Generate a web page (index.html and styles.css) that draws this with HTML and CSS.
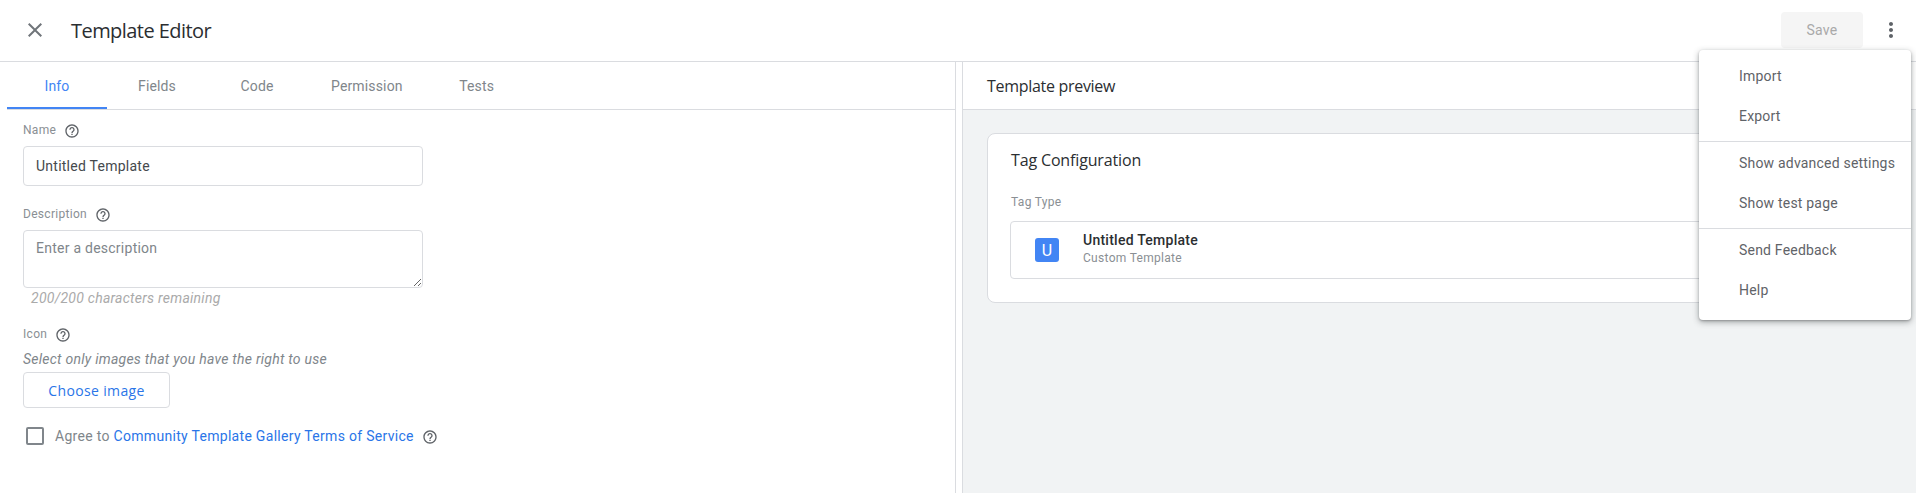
FILE: index.html
```html
<!DOCTYPE html>
<html lang="en">
<head>
<meta charset="utf-8">
<title>Template Editor</title>
<link rel="stylesheet" href="styles.css">
</head>
<body>
<div class="page">
  <header class="topbar">
    <svg class="icon close" viewBox="0 0 24 24"><path d="M19 6.41 17.59 5 12 10.59 6.41 5 5 6.41 10.59 12 5 17.59 6.41 19 12 13.41 17.59 19 19 17.59 13.41 12z"/></svg>
    <h1 class="title">Template Editor</h1>
    <div class="save">Save</div>
    <svg class="icon more" viewBox="0 0 24 24"><path d="M12 8c1.1 0 2-.9 2-2s-.9-2-2-2-2 .9-2 2 .9 2 2 2zm0 2c-1.1 0-2 .9-2 2s.9 2 2 2 2-.9 2-2-.9-2-2-2zm0 6c-1.1 0-2 .9-2 2s.9 2 2 2 2-.9 2-2-.9-2-2-2z"/></svg>
  </header>
  <main class="main">
    <section class="left">
      <nav class="tabs">
        <div class="tab active">Info</div>
        <div class="tab">Fields</div>
        <div class="tab">Code</div>
        <div class="tab">Permission</div>
        <div class="tab">Tests</div>
      </nav>
      <form class="form">
        <div class="label name-label">Name
          <svg class="help" viewBox="0 0 24 24"><path d="M11 18h2v-2h-2v2zm1-16C6.48 2 2 6.48 2 12s4.48 10 10 10 10-4.48 10-10S17.52 2 12 2zm0 18c-4.41 0-8-3.59-8-8s3.59-8 8-8 8 3.59 8 8-3.59 8-8 8zm0-14c-2.21 0-4 1.79-4 4h2c0-1.1.9-2 2-2s2 .9 2 2c0 2-3 1.75-3 5h2c0-2.25 3-2.5 3-5 0-2.21-1.79-4-4-4z"/></svg>
        </div>
        <input class="field name-input" type="text" value="Untitled Template">
        <div class="label desc-label">Description
          <svg class="help" viewBox="0 0 24 24"><path d="M11 18h2v-2h-2v2zm1-16C6.48 2 2 6.48 2 12s4.48 10 10 10 10-4.48 10-10S17.52 2 12 2zm0 18c-4.41 0-8-3.59-8-8s3.59-8 8-8 8 3.59 8 8-3.59 8-8 8zm0-14c-2.21 0-4 1.79-4 4h2c0-1.1.9-2 2-2s2 .9 2 2c0 2-3 1.75-3 5h2c0-2.25 3-2.5 3-5 0-2.21-1.79-4-4-4z"/></svg>
        </div>
        <textarea class="field desc-input" placeholder="Enter a description"></textarea>
        <div class="remaining">200/200 characters remaining</div>
        <div class="label icon-label">Icon
          <svg class="help" viewBox="0 0 24 24"><path d="M11 18h2v-2h-2v2zm1-16C6.48 2 2 6.48 2 12s4.48 10 10 10 10-4.48 10-10S17.52 2 12 2zm0 18c-4.41 0-8-3.59-8-8s3.59-8 8-8 8 3.59 8 8-3.59 8-8 8zm0-14c-2.21 0-4 1.79-4 4h2c0-1.1.9-2 2-2s2 .9 2 2c0 2-3 1.75-3 5h2c0-2.25 3-2.5 3-5 0-2.21-1.79-4-4-4z"/></svg>
        </div>
        <div class="hint">Select only images that you have the right to use</div>
        <div class="choose">Choose image</div>
        <div class="agree">
          <span class="checkbox"></span>
          <span class="agree-text">Agree to <a class="link">Community Template Gallery Terms of Service</a></span>
          <svg class="help" viewBox="0 0 24 24"><path d="M11 18h2v-2h-2v2zm1-16C6.48 2 2 6.48 2 12s4.48 10 10 10 10-4.48 10-10S17.52 2 12 2zm0 18c-4.41 0-8-3.59-8-8s3.59-8 8-8 8 3.59 8 8-3.59 8-8 8zm0-14c-2.21 0-4 1.79-4 4h2c0-1.1.9-2 2-2s2 .9 2 2c0 2-3 1.75-3 5h2c0-2.25 3-2.5 3-5 0-2.21-1.79-4-4-4z"/></svg>
        </div>
      </form>
    </section>
    <section class="right">
      <div class="preview-head">Template preview</div>
      <div class="preview-body">
        <div class="card">
          <h2 class="card-title">Tag Configuration</h2>
          <div class="card-label">Tag Type</div>
          <div class="tag-box">
            <div class="tag-icon">U</div>
            <div class="tag-text">
              <div class="tag-name">Untitled Template</div>
              <div class="tag-sub">Custom Template</div>
            </div>
          </div>
        </div>
      </div>
    </section>
  </main>
  <div class="menu">
    <div class="menu-item">Import</div>
    <div class="menu-item">Export</div>
    <div class="menu-divider"></div>
    <div class="menu-item">Show advanced settings</div>
    <div class="menu-item">Show test page</div>
    <div class="menu-divider"></div>
    <div class="menu-item">Send Feedback</div>
    <div class="menu-item">Help</div>
  </div>
</div>
</body>
</html>
```

FILE: styles.css
```css
* { box-sizing: border-box; }
html, body { margin: 0; height: 100%; overflow: hidden; background: #fff; }
body { font-family: Roboto, "Liberation Sans", sans-serif; color: #3c4043; font-size: 14px; }
.page { position: relative; height: 493px; display: flex; flex-direction: column; }

.topbar { height: 62px; flex: none; display: flex; align-items: center; border-bottom: 1px solid #dadce0; padding: 0 13px 1px 23px; }
.icon { width: 24px; height: 24px; fill: #5f6368; flex: none; }
.close { fill: #70757a; }
.title { margin: 0 0 0 24px; font: 400 20px "Open Sans", sans-serif; letter-spacing: -0.55px; color: #2b2e31; flex: 1; }
.save { width: 82px; height: 36px; background: #f5f5f5; border-radius: 4px; color: #a9a9a9; font-weight: 400; letter-spacing: .25px; display: flex; align-items: center; justify-content: center; margin-right: 16px; }

.main { flex: 1; display: flex; min-height: 0; }
.left { width: 956px; flex: none; border-right: 1px solid #dadce0; }
.tabs { display: flex; height: 48px; margin-left: 7px; border-bottom: 1px solid #dadce0; }
.tab { min-width: 100px; padding: 0 24px; height: 47px; display: flex; align-items: center; justify-content: center; color: #80868b; letter-spacing: .15px; }
.tab.active { color: #4285f4; border-bottom: 2px solid #4285f4; padding-top: 2px; height: 47px; }

.form { display: flex; flex-direction: column; align-items: flex-start; padding-left: 23px; }
.label { height: 16px; font-size: 12px; line-height: 16px; color: #8a8f94; letter-spacing: .3px; display: flex; align-items: center; gap: 8px; }
.help { width: 16px; height: 16px; fill: #5f6368; flex: none; margin-top: 2px; }
.name-label { margin-top: 12px; }
.field { display: block; width: 400px; border: 1px solid #dadce0; border-radius: 4px; font: 400 14px Roboto, sans-serif; letter-spacing: .25px; color: #45494d; outline: none; padding: 0 12px; background: #fff; }
.field::placeholder { color: #80868b; opacity: 1; }
.name-input { height: 40px; margin-top: 8px; }
.desc-label { margin-top: 20px; }
.desc-input { height: 58px; margin-top: 8px; padding-top: 8px; line-height: 18px; }
.remaining { margin: 2px 0 0 8px; font-style: italic; line-height: 16px; color: #aaa; letter-spacing: .25px; }
.icon-label { margin-top: 20px; }
.hint { margin-top: 9px; font-style: italic; line-height: 16px; color: #80868b; letter-spacing: .25px; }
.choose { margin-top: 5px; width: 147px; height: 36px; border: 1px solid #dadce0; border-radius: 4px; display: flex; align-items: center; justify-content: center; color: #2a75e8; font: 500 14px "Open Sans", sans-serif; letter-spacing: .35px; }
.agree { margin: 19px 0 0 3px; display: flex; align-items: center; height: 18px; }
.checkbox { width: 18px; height: 18px; border: 2px solid #80868b; border-radius: 2px; flex: none; }
.agree-text { margin-left: 11px; color: #80868b; letter-spacing: .3px; line-height: 18px; }
.link { color: #2a75e8; }
.agree .help { margin-left: 8px; }

.right { flex: 1; min-width: 0; margin-left: 6px; border-left: 1px solid #dadce0; display: flex; flex-direction: column; }
.preview-head { height: 48px; flex: none; border-bottom: 1px solid #dadce0; display: flex; align-items: center; padding-left: 24px; font: 400 16px "Open Sans", sans-serif; letter-spacing: -0.3px; color: #2b2e31; }
.preview-body { flex: 1; background: #f1f3f4; padding: 23px 24px; }
.card { height: 170px; background: #fff; border: 1px solid #dadce0; border-radius: 8px; padding: 0 23px; }
.card-title { margin: 14px 0 0; font: 400 16px/24px "Open Sans", sans-serif; letter-spacing: -0.15px; color: #2b2e31; }
.card-label { margin-top: 22px; font-size: 12px; line-height: 16px; color: #8a8f94; letter-spacing: .3px; }
.tag-box { margin: 11px 0 0 -1px; height: 58px; border: 1px solid #dadce0; border-radius: 4px; display: flex; align-items: center; padding-left: 24px; }
.tag-icon { width: 24px; height: 24px; background: #4285f4; color: #fff; border-radius: 3px; display: flex; align-items: center; justify-content: center; font-size: 16px; font-weight: 400; }
.tag-text { margin: -2px 0 0 24px; }
.tag-name { font-weight: 500; line-height: 18px; color: #2b2e31; letter-spacing: .25px; }
.tag-sub { font-size: 12px; line-height: 18px; color: #8a8f94; letter-spacing: .3px; }

.menu { position: absolute; left: 1699px; top: 50px; width: 212px; height: 270px; background: #fff; border-radius: 4px; padding: 6px 0 10px; box-shadow: 0 2px 6px rgba(60,64,67,.45), 0 1px 2px rgba(60,64,67,.3); }
.menu-item { height: 40px; display: flex; align-items: center; padding-left: 40px; color: #5f6368; letter-spacing: .2px; white-space: nowrap; }
.menu-divider { height: 1px; background: #dadce0; margin: 5px 0 1px; }
```
